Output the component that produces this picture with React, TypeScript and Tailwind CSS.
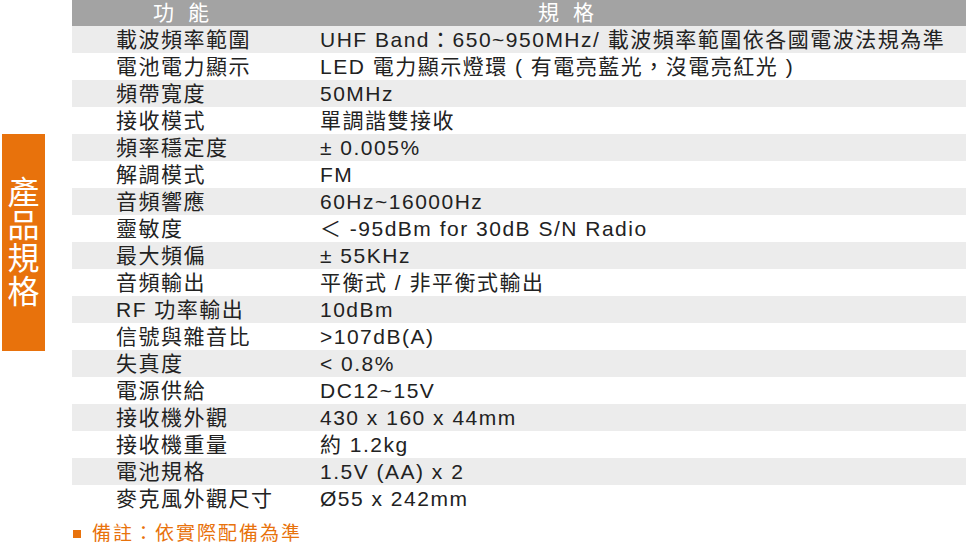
const rows: [string, string][] = [
  ['載波頻率範圍', 'UHF Band：650~950MHz/ 載波頻率範圍依各國電波法規為準'],
  ['電池電力顯示', 'LED 電力顯示燈環 ( 有電亮藍光，沒電亮紅光 )'],
  ['頻帶寬度', '50MHz'],
  ['接收模式', '單調諧雙接收'],
  ['頻率穩定度', '± 0.005%'],
  ['解調模式', 'FM'],
  ['音頻響應', '60Hz~16000Hz'],
  ['靈敏度', '＜ -95dBm for 30dB S/N Radio'],
  ['最大頻偏', '± 55KHz'],
  ['音頻輸出', '平衡式 / 非平衡式輸出'],
  ['RF 功率輸出', '10dBm'],
  ['信號與雜音比', '>107dB(A)'],
  ['失真度', '< 0.8%'],
  ['電源供給', 'DC12~15V'],
  ['接收機外觀', '430 x 160 x 44mm'],
  ['接收機重量', '約 1.2kg'],
  ['電池規格', '1.5V (AA) x 2'],
  ['麥克風外觀尺寸', 'Ø55 x 242mm'],
];

export default function App() {
  return (
    <div
      className="w-[966px] h-[550px] bg-white overflow-hidden flex text-[#222]"
      style={{ fontFamily: '"Liberation Sans", "Noto Sans CJK TC", sans-serif' }}
    >
      {/* side label */}
      <div className="w-[72px] shrink-0 pt-[134px] pl-[2px]">
        <div className="w-[43px] h-[217px] bg-[#e8720c] flex flex-col items-center justify-center text-white text-[32px] leading-[33px]">
          <span>產</span>
          <span>品</span>
          <span>規</span>
          <span>格</span>
        </div>
      </div>

      <div className="flex-1 flex flex-col min-w-0">
        {/* header */}
        <div className="h-[26px] bg-[#a3a3a3] text-white text-[21px] leading-[26px] flex whitespace-nowrap">
          <div className="w-[248px] shrink-0 pl-[81px] tracking-[14px]">功能</div>
          <div className="pl-[218px] tracking-[14px]">規格</div>
        </div>

        {rows.map(([k, v], i) => (
          <div
            key={k}
            className={`h-[27px] flex items-center text-[21px] leading-[27px] whitespace-nowrap tracking-[1.5px] ${
              i % 2 === 0 ? 'bg-[#ececec]' : 'bg-white'
            }`}
          >
            <div className="w-[248px] shrink-0 pl-[44px]">{k}</div>
            <div>{v}</div>
          </div>
        ))}

        <div className="mt-[10px] flex items-center gap-[11px] text-[#e8720c] text-[19px] leading-[24px]">
          <span className="w-[8px] h-[8px] bg-[#e8720c] ml-[1px]" />
          <span className="tracking-[2px]">備註：依實際配備為準</span>
        </div>
      </div>
    </div>
  );
}
